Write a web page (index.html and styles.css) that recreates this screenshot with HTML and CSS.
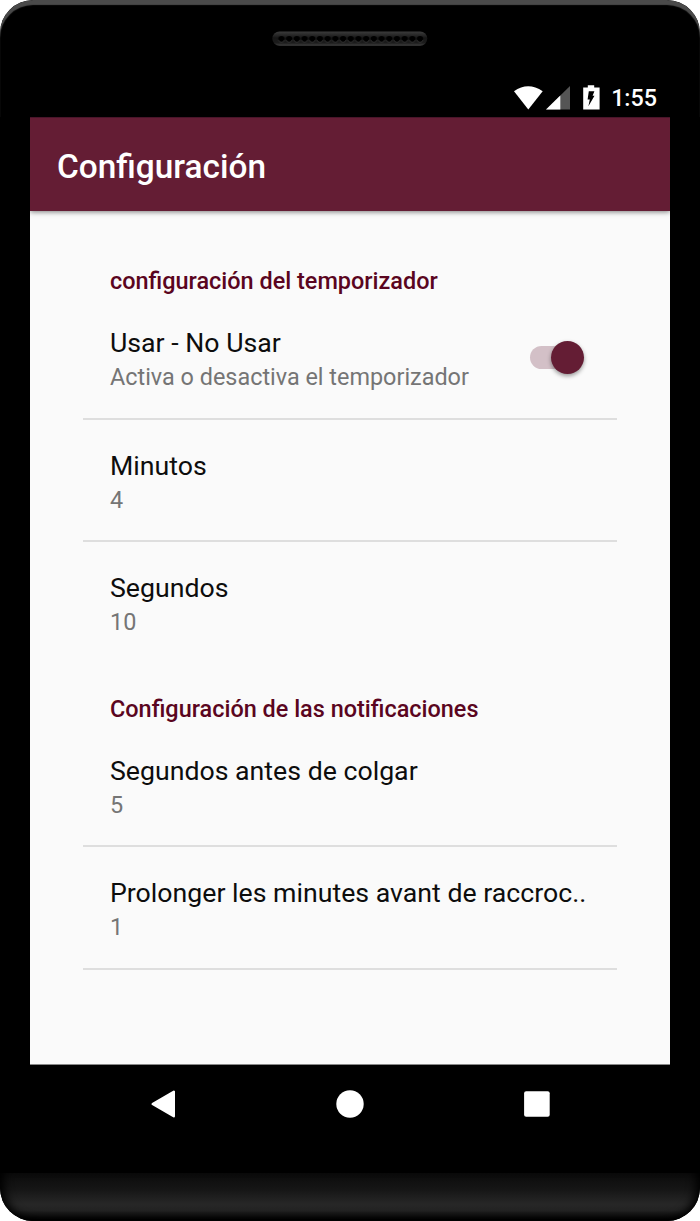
FILE: index.html
```
<!DOCTYPE html>
<html lang="es">

<head>
    <title>Configuración</title>
    <meta charset="utf-8">
    <meta name="viewport" content="width=device-width, initial-scale=1.0">
    <link rel="stylesheet" href="styles.css">
</head>

<body>

    <div class="phone">
        <div class="top">
            <svg class="speaker" width="156" height="16" viewBox="0 0 156 16">
                <defs>
                    <linearGradient id="rim" x1="0" y1="0" x2="0" y2="1">
                        <stop offset="0" stop-color="#3c3c3c" />
                        <stop offset="0.3" stop-color="#242424" />
                        <stop offset="0.45" stop-color="#161616" />
                        <stop offset="0.8" stop-color="#1c1c1c" />
                        <stop offset="1" stop-color="#424242" />
                    </linearGradient>
                    <pattern id="holes" x="5.6" y="4" width="7.7" height="9" patternUnits="userSpaceOnUse">
                        <circle cx="3.85" cy="4.2" r="3.2" fill="#000" />
                        <path d="M0.8 4.8a3.1 3.1 0 0 0 6.1 0" fill="none" stroke="#3c3c3c" stroke-width="0.8" />
                    </pattern>
                </defs>
                <rect x="0.3" y="0.4" width="155" height="14.4" rx="7.2" fill="url(#rim)" />
                <rect x="5.6" y="4" width="146.3" height="9" fill="url(#holes)" />
            </svg>
            <div class="status">
                <svg width="87" height="26" viewBox="0 0 87 26">
                    <path d="M0 6.3Q14 -3.6 28.7 6.3L14.3 24.5z" fill="#fff" />
                    <path d="M56 1v23.6H32z" fill="#555" />
                    <path d="M46.3 10.5V24.6H32z" fill="#fff" />
                    <path d="M69.2 2.4h4.6V0.3h6.4v2.1h5.4V24.4H69.2z" fill="#fff" />
                    <path d="M74.8 6.2h5.6l-1.8 4.6h1.9l-6.1 10.4 1.4-6.6h-2.2z" fill="#000" />
                </svg>
                <span class="time">1:55</span>
            </div>
        </div>

        <div class="screen">
            <header>
                <h1>Configuración</h1>
            </header>

            <main>
                <h2>configuración del temporizador</h2>
                <div class="item switch-item">
                    <div>
                        <h3>Usar - No Usar</h3>
                        <p>Activa o desactiva el temporizador</p>
                    </div>
                    <div class="switch"></div>
                </div>
                <div class="item">
                    <h3>Minutos</h3>
                    <p>4</p>
                </div>
                <div class="item last">
                    <h3>Segundos</h3>
                    <p>10</p>
                </div>

                <h2>Configuración de las notificaciones</h2>
                <div class="item">
                    <h3>Segundos antes de colgar</h3>
                    <p>5</p>
                </div>
                <div class="item">
                    <h3>Prolonger les minutes avant de raccroc..</h3>
                    <p>1</p>
                </div>
            </main>
        </div>

        <nav>
            <svg width="26" height="28" viewBox="0 0 26 28">
                <path d="M2.7 14L23.8 1.7V26.3z" fill="#fff" stroke="#fff" stroke-width="2.4" stroke-linejoin="round" />
            </svg>
            <svg width="28" height="28" viewBox="0 0 28 28">
                <circle cx="14" cy="14" r="13.7" fill="#fff" />
            </svg>
            <svg width="26" height="26" viewBox="0 0 26 26">
                <rect x="0.1" y="0.3" width="25.6" height="25.4" rx="2" fill="#fff" />
            </svg>
        </nav>

        <div class="chin"></div>
    </div>

</body>

</html>
```

FILE: styles.css
```
* {
    box-sizing: border-box;
}

body {
    margin: 0;
    background-color: #fff;
    font-family: Roboto, sans-serif;
}

h1, h2, h3, p {
    margin: 0;
    white-space: nowrap;
}

svg {
    display: block;
}

.phone {
    display: flex;
    flex-direction: column;
    width: 700px;
    height: 1221px;
    background-color: #000;
    border-radius: 33px;
    overflow: hidden;
}

.top {
    display: flex;
    flex-direction: column;
    align-items: center;
    height: 117px;
    padding-top: 31px;
    border-radius: 33px 33px 0 0;
    box-shadow: inset 0 5px 1px #4a4a4a;
}

.speaker {
    margin-right: 1px;
}

.status {
    display: flex;
    align-self: flex-end;
    align-items: flex-start;
    gap: 10px;
    margin: 38px 43px 0 0;
}

.time {
    color: #fff;
    font-size: 23.3px;
    font-weight: 500;
    line-height: 27px;
}

.screen {
    height: 948px;
    margin: 0 30px;
    background-color: #fafafa;
    border-bottom: 1px solid #888;
}

header {
    display: flex;
    align-items: center;
    height: 94px;
    padding: 3px 27px 0;
    background-color: #641d34;
    border-top: 1px solid #49152a;
    box-shadow: 0 1px 5px rgba(0, 0, 0, 0.5);
    clip-path: inset(0 0 -10px 0);
}

h1 {
    color: #fff;
    font-size: 33.4px;
    font-weight: 500;
}

main {
    padding: 26px 53px 0;
}

h2 {
    height: 60px;
    padding: 31px 27px 0;
    color: #5a0520;
    font-size: 23.45px;
    font-weight: 500;
    line-height: 27px;
}

.item {
    height: 122.6px;
    padding: 30px 27px 0;
    border-bottom: 2px solid #dedede;
}

.last {
    border-bottom: none;
}

.switch-item {
    display: flex;
    justify-content: space-between;
}

h3 {
    color: #0d0d0d;
    font-size: 26.7px;
    font-weight: 400;
    line-height: 32px;
}

p {
    margin-top: 4px;
    color: #757575;
    font-size: 23.42px;
    line-height: 28px;
}

.switch {
    position: relative;
    width: 50px;
    height: 23px;
    margin: 19px 10px 0 0;
    border-radius: 12px;
    background-color: #d3c0c7;
}

.switch::after {
    content: "";
    position: absolute;
    right: -4px;
    top: -5px;
    width: 33px;
    height: 33px;
    border-radius: 50%;
    background-color: #641d34;
    box-shadow: 0 2px 4px rgba(0, 0, 0, 0.4);
}

nav {
    display: flex;
    justify-content: space-between;
    align-items: center;
    height: 78px;
    padding: 0 150px;
}

.chin {
    height: 48px;
    margin-top: auto;
    border-radius: 0 0 33px 33px;
    background: linear-gradient(#0b0b0b, #161616 35%, #272727 65%, #222 78%, #000 98%);
    box-shadow: inset 8px -2px 10px -4px #000, inset -8px -2px 10px -4px #000;
}
```
